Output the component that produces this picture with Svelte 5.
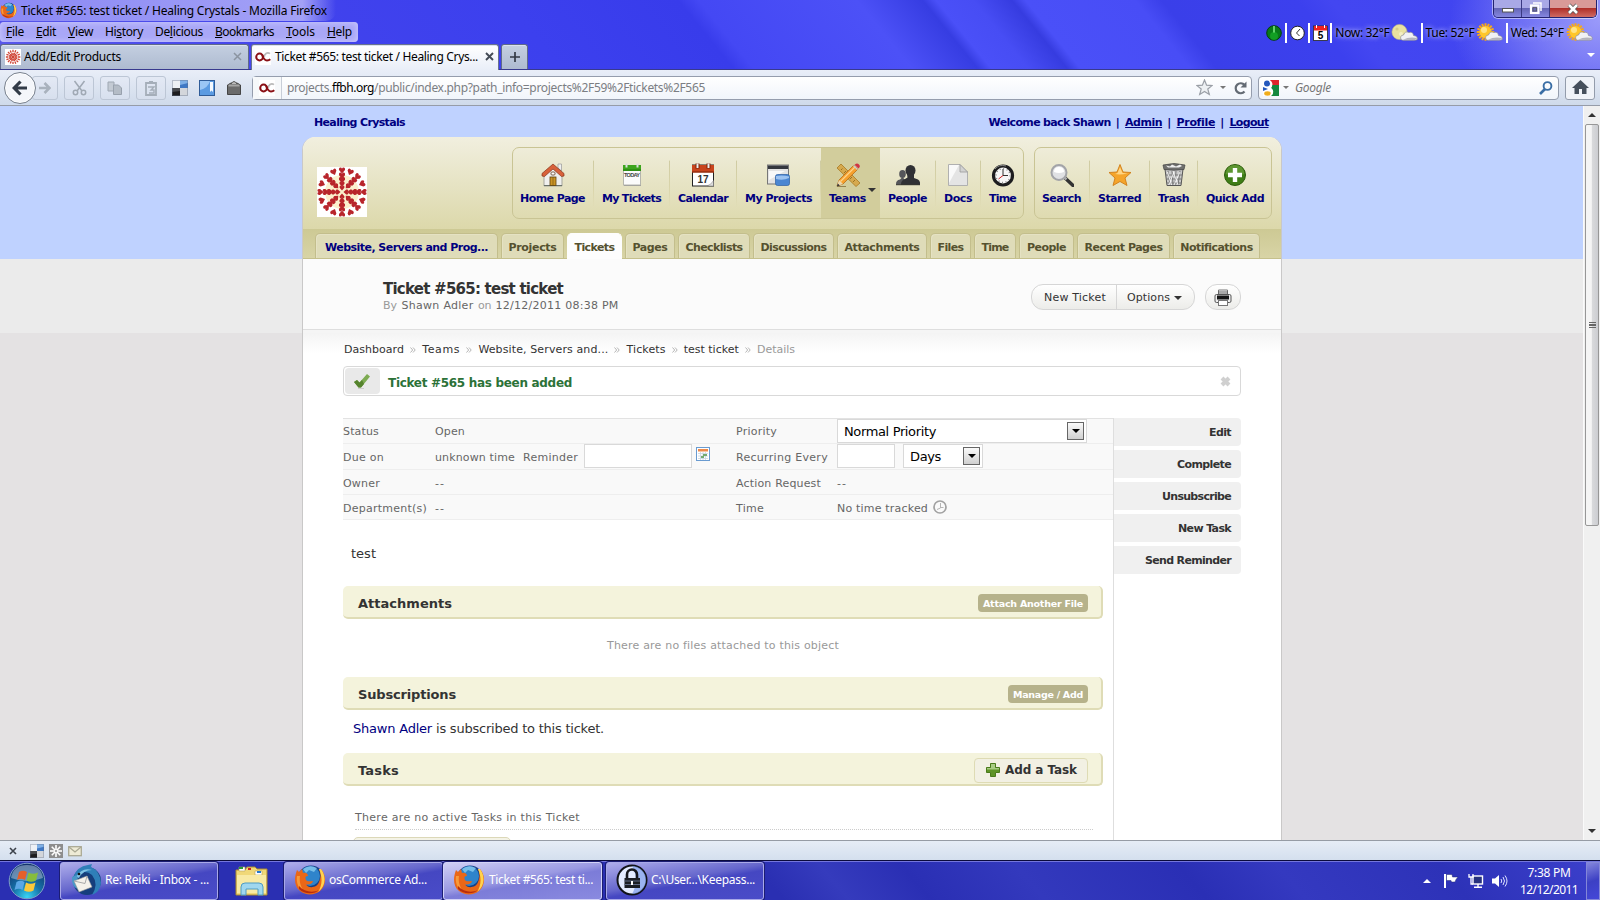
<script>
  // Tracks a label so that it fills its designed width.
  function fit(node, width) {
    const natural = node.getBoundingClientRect().width;
    const n = node.textContent.length;
    if (n && width) node.style.letterSpacing = ((width - natural) / n).toFixed(3) + 'px';
  }

  const menu = [
    ['File', 0, 18, 12], ['Edit', 0, 20, 12], ['View', 0, 25, 12], ['History', 2, 38, 12],
    ['Delicious', 2, 48, 12], ['Bookmarks', 0, 59, 12], ['Tools', 0, 29, 12], ['Help', 0, 25, 6]
  ];
  const mainNav = [
    { label: 'Home Page', w: 65, size: 81, icon: 'home' },
    { label: 'My Tickets', w: 59, size: 76, icon: 'today' },
    { label: 'Calendar', w: 50, size: 67, icon: 'calendar' },
    { label: 'My Projects', w: 67, size: 84, icon: 'projects' },
    { label: 'Teams', w: 37, size: 59, icon: 'teams', active: true },
    { label: 'People', w: 39, size: 56, icon: 'people' },
    { label: 'Docs', w: 28, size: 45, icon: 'docs' },
    { label: 'Time', w: 27, size: 42, icon: 'time' }
  ];
  const toolsNav = [
    { label: 'Search', w: 39, size: 55, icon: 'search' },
    { label: 'Starred', w: 43, size: 60, icon: 'star' },
    { label: 'Trash', w: 31, size: 48, icon: 'trash' },
    { label: 'Quick Add', w: 58, size: 73, icon: 'add' }
  ];
  const tabs = [
    ['Website, Servers and Prog...', 183, 163], ['Projects', 63, 48], ['Tickets', 55, 40],
    ['Pages', 50, 35], ['Checklists', 72, 57], ['Discussions', 81, 66], ['Attachments', 90, 75],
    ['Files', 41, 26], ['Time', 42, 27], ['People', 55, 39], ['Recent Pages', 93, 78],
    ['Notifications', 87, 72]
  ];
  const crumbs = [
    ['Dashboard', 60], ['Teams', 38], ['Website, Servers and...', 130],
    ['Tickets', 39], ['test ticket', 55], ['Details', 38]
  ];
  const actions = [['Edit', 22], ['Complete', 54], ['Unsubscribe', 69], ['New Task', 53], ['Send Reminder', 86]];
  const rays = Array.from({ length: 16 }, (_, i) => i * 22.5);
</script>

{#snippet t(text, w, cls = '')}<span class="t {cls}" use:fit={w}>{text}</span>{/snippet}

{#snippet heart(x, y, s)}
  <path transform="translate({x} {y}) scale({s})" d="M0 3.2 L-3 -.3 Q-3.4 -3 -1.6 -3 Q-.2 -3 0 -1.7 Q.2 -3 1.6 -3 Q3.4 -3 3 -.3Z" />
{/snippet}

{#snippet logo()}
  <svg class="logo" viewBox="0 0 50 50">
    <rect width="50" height="50" fill="#fff" />
    <circle cx="25" cy="25" r="17" fill="#fbf0cd" />
    <g fill="#b8252b">
      {#each rays as a, i}
        <g transform="rotate({a} 25 25)">
          {@render heart(25, 3.4, 1)}
          {#if i % 2 === 0}
            {@render heart(25, 8.6, 1)}
            {@render heart(25, 13, 1)}
            {@render heart(25, 17, 0.85)}
            {#if i % 4 === 0}{@render heart(25, 21, 0.8)}{/if}
          {/if}
        </g>
      {/each}
    </g>
  </svg>
{/snippet}

{#snippet burst(size, bg, color)}
  <svg width={size} height={size} viewBox="0 0 16 16">
    <rect width="16" height="16" fill={bg} />
    <g stroke={color} stroke-width="1.3">
      {#each rays.slice(0, 8) as a}<path transform="rotate({a} 8 8)" d="M8 .7v14.6" stroke-dasharray="2.4 .6" />{/each}
    </g>
  </svg>
{/snippet}

{#snippet oc()}
  <svg width="16" height="16" viewBox="0 0 16 16">
    <rect width="16" height="16" fill="#fff" />
    <path d="M15 4.6A3.6 3.6 0 0 0 9.3 8" fill="none" stroke="#bbb" stroke-width="1.8" />
    <circle cx="4.6" cy="8" r="3.4" fill="none" stroke="#8a1015" stroke-width="2" />
    <path d="M7 5.5Q9 11.4 12 11.4Q14 11.4 15.3 10.3" fill="none" stroke="#8a1015" stroke-width="2" />
  </svg>
{/snippet}

{#snippet delicious(s)}
  <svg width={s} height={s} viewBox="0 0 16 16">
    <rect width="8" height="8" fill="#eef1f5" /><rect x="8" width="8" height="8" fill="#3f78c4" />
    <path d="M8 5L16 3V0H8Z" fill="#7fb0e6" />
    <rect y="8" width="8" height="8" fill="#1d1d1f" /><path d="M0 8H8V11L0 12Z" fill="#47494d" />
    <rect x="8" y="8" width="8" height="8" fill="#d3d6db" />
    <rect x=".5" y=".5" width="15" height="15" fill="none" stroke="#61718a" stroke-opacity=".4" />
  </svg>
{/snippet}

{#snippet firefox(s)}
  <svg width={s} height={s} viewBox="0 0 32 32">
    <circle cx="17" cy="15" r="13.5" fill="#173f86" />
    <circle cx="16" cy="12" r="10" fill="#2f84cb" />
    <path d="M9 5Q16 0 23 4L20 8L15 6L12 9Z" fill="#8fd0f2" opacity=".75" />
    <path d="M27 5C33 12 32 22 26 27C21 31 12 32 6 27C0 22 0 14 3 6L5 8L8 5L9 9C12 8 14 10 14 12C11 12 11 14 12 16C13 18 17 17 19 17C18 21 13 21 12 20C14 25 23 24 25 18C27 13 27 9 25 5Z" fill="#ea6717" />
    <path d="M27 5C33 13 31 23 24 28C28 22 29 14 25 5Z" fill="#ffd44e" />
    <path d="M3 12C2 18 4 25 11 28C7 24 5 18 6 12Z" fill="#f79a3a" />
    <path d="M5 25C11 31 21 30 25 26C19 29 10 28 5 22Z" fill="#b82d0d" />
  </svg>
{/snippet}

{#snippet weather(night, w)}
  <svg width={w} height="20" viewBox="0 0 27 20">
    {#if night}
      <circle cx="8.5" cy="9" r="7.6" fill="#e9e1a0" stroke="#bdb783" stroke-width=".6" />
      <circle cx="6" cy="6" r="1.6" fill="#d4cc8a" /><circle cx="10" cy="11" r="2" fill="#f4efc4" />
    {:else}
      <g stroke="#f6a81c" stroke-width="2">
        {#each rays.slice(0, 8) as a}<path transform="rotate({a} 9.5 9)" d="M9.5 .2v17.6" />{/each}
      </g>
      <circle cx="9.5" cy="9" r="6" fill="#ffc629" /><circle cx="8" cy="7" r="3" fill="#ffe487" />
    {/if}
    <path d="M10 16.5Q8.5 12.5 12.5 12Q14 7.5 18 9.5Q22 8.500 22.500 12.500Q27 13 26.200 16.500Q25 17.500 22 17.300H13Q11 17.500 10 16.500Z" fill="#f1f1f4" stroke="#8d8d99" stroke-width=".7" />
    <path d="M12 16.800Q18 13.500 26 15Q25.500 17.200 22 17.100Z" fill="#b4b4bd" />
  </svg>
{/snippet}

{#snippet navIcon(name)}
  <svg class="nav-icon" width="24" height="24" viewBox="0 0 24 24">
    {#if name === 'home'}
      <path d="M17 1h3.500v7L17 5Z" fill="#eee" stroke="#999" stroke-width=".7" />
      <path d="M3 11L12 4L21 11V23H3Z" fill="#f0f0ee" stroke="#a5a59d" />
      <path d="M3 22.500h18" stroke="#69726a" />
      <path d="M1 13V10.500L12 1L23 10.500V13L20.500 13.500L12 6L3.500 13.500Z" fill="#d8613a" stroke="#85341b" stroke-width=".7" />
      <rect x="9" y="14" width="6" height="8.500" fill="#cb9425" stroke="#5f430d" stroke-width=".8" /><path d="M12 14v8" stroke="#73500f" stroke-width=".6" />
      <rect x="10" y="9" width="4" height="3" rx="1" fill="#fff" stroke="#7b5f48" />
    {:else if name === 'today'}
      <rect x="3.500" y="2.500" width="17" height="19.500" fill="#fbfbfb" stroke="#b5b5ad" />
      <path d="M3 2h18v6H3Z" fill="#3da51d" /><path d="M3 7h18" stroke="#257b0e" />
      <path d="M6.500 .5v4M17.500 .5v4" stroke="#ddd" stroke-width="2" />
      <text x="12" y="14.200" text-anchor="middle" font-size="5.500" fill="#444" textLength="16">TODAY</text>
      <path d="M4 22.500h17" stroke="#999" stroke-width=".8" />
    {:else if name === 'calendar'}
      <rect x="1.500" y="2" width="21" height="21" fill="#fff" stroke="#222" />
      <path d="M1 2h22v7.500H1Z" fill="#c9441c" /><path d="M1 9h22" stroke="#7f2307" />
      <path d="M6.500 .5v5M17.500 .5v5" stroke="#7f2307" stroke-width="4" /><path d="M6.500 .5v4.500M17.500 .5v4.500" stroke="#eee" stroke-width="2" />
      <text x="12" y="20" text-anchor="middle" font-size="10" font-weight="bold" fill="#333" textLength="11">17</text>
      <path d="M16 23Q20 22 22.500 17.500V23Z" fill="#ddd" stroke="#777" stroke-width=".5" />
    {:else if name === 'projects'}
      <rect x="1.500" y="2" width="21" height="19" fill="#e3e3e3" stroke="#777" />
      <path d="M2 2.500h20v3.500H2Z" fill="#34373e" /><path d="M3 8h16L3 17Z" fill="#f8f8f8" />
      <rect x="9.500" y="11.500" width="14" height="11" rx="2" fill="#4a86d2" stroke="#2d5fa3" stroke-width=".7" /><path d="M10 16Q17 18 23 15v-1.500Q17 12 10 13Z" fill="#9cc2f0" />
    {:else if name === 'teams'}
      <path d="M1 5L5 1L24 20L20 23.500Z" fill="#d6a94e" stroke="#a87a23" stroke-width=".8" />
      <path d="M5 7l1.500-1.500M8 10l2-2M14 16l2-2M17 19l2-2" stroke="#8b6518" stroke-width=".8" />
      <path d="M1 23L3 17L18 2L22 6L7 21Z" fill="#f6a02c" stroke="#ad6311" stroke-width=".7" />
      <path d="M4.500 18.500L19.500 3.500" stroke="#ffd389" stroke-width="1.200" /><path d="M1 23L3 17L7 21Z" fill="#ecd7ae" /><path d="M.8 23.500l1-3l2 2Z" fill="#333" />
      <path d="M17 3l4 4 1-1-4-4Z" fill="#ccc" /><path d="M19 1.500Q21-.5 23 1.500T22.500 5.500L18.500 1.800Z" fill="#cf3545" />
      <path d="M1 23.500h9" stroke="#806c3c" stroke-width=".8" />
    {:else if name === 'people'}
      <g fill="#55565a"><ellipse cx="6.500" cy="11" rx="3.300" ry="4" /><path d="M0 21Q0 17 4 16.500L6.500 14L9 17L10 21Z" /></g>
      <g fill="#303135"><ellipse cx="14.500" cy="7.500" rx="5" ry="5.500" /><path d="M11 11H18V15L22 16.500Q24.500 18 24 21.500H5Q5 17 9 16L11.500 14.500Z" /></g>
      <path d="M0 21.700h24" stroke="#222" />
    {:else if name === 'docs'}
      <path d="M2.500 1.500H14L21.500 9V22.500H2.500Z" fill="#e4e4e4" stroke="#b0b0b0" /><path d="M3 2h10L3 20Z" fill="#f9f9f9" />
      <path d="M14 1.500L21.500 9H14Z" fill="#d2d2d2" stroke="#999" stroke-width=".8" />
    {:else if name === 'time'}
      <circle cx="12" cy="12.500" r="9.500" fill="#f7f7f7" stroke="#1d1d1f" stroke-width="3.200" />
      <circle cx="12" cy="12.500" r="7" fill="none" stroke="#888" stroke-width="1.500" stroke-dasharray="1 2.660" />
      <path d="M12 6v6.500h5" fill="none" stroke="#333" stroke-width="1" /><path d="M12 12.500l-4.500 3.500" stroke="#c22" />
      <path d="M4 6Q8 1 15 3" stroke="#888" fill="none" />
    {:else if name === 'search'}
      <path d="M14 14L23 22.500" stroke="#333" stroke-width="3.400" stroke-linecap="round" /><path d="M13.500 13.500l3 3" stroke="#aaa" stroke-width="2.500" />
      <circle cx="9" cy="9.500" r="7.500" fill="#e0e1e4" stroke="#a3a4a8" stroke-width="2" /><path d="M4 9Q4 4 9 4T14 9Q9 11 4 9Z" fill="#fff" />
    {:else if name === 'star'}
      <path d="M12 1.500L15 9L23 9.500L17 15L19 22.500L12 18.500L5 22.500L7 15L1 9.500L9 9Z" fill="#f5a52b" stroke="#cf7d17" stroke-width=".9" />
      <path d="M12 4l2.500 6 5 .5Q12 12 7 11l2.500-1Z" fill="#ffd685" />
    {:else if name === 'trash'}
      <path d="M3 6H21L19 22.500H5Z" fill="#c9c9c9" stroke="#555" /><path d="M6 8l2 14M10 8l1 14M14 8l-1 14M18 8l-2 14M4 12h16M5 16h14M5 20h14" stroke="#777" />
      <path d="M5.500 9l4 13M11 8l5 14M18 9l-6 13M12 9L7 22" stroke="#f7f7f7" stroke-width=".9" />
      <path d="M1 2Q12-1 23 2L22 6.500Q12 8 2 6.500Z" fill="#70706e" stroke="#444" stroke-width=".7" /><path d="M4 2.500l4 1 2-2 4 2 4-2 2 1.500-3 1.500H6Z" fill="#f0f0f0" />
    {:else if name === 'add'}
      <circle cx="12" cy="12" r="10.500" fill="#3f7d16" stroke="#2d5c0c" /><path d="M2.500 11Q4 2 12 2T21.500 11Q12 14 2.500 11Z" fill="#6ba13d" opacity=".7" />
      <path d="M9.800 5h4.400v4.800H19v4.400h-4.800V19H9.800v-4.800H5V9.800h4.800Z" fill="#fff" />
    {/if}
  </svg>
{/snippet}

{#snippet navGroup(items)}
  <nav class="group">
    {#each items as it, i}
      <a class="nav-item" class:active={it.active} class:last={i === items.length - 1} style:width="{it.size}px">
        <span class="nav-inner">
          {@render navIcon(it.icon)}
          {@render t(it.label, it.w, 'nav-label')}
        </span>
        {#if it.active}<i class="tri dark nav-tri"></i>{/if}
      </a>
    {/each}
  </nav>
{/snippet}

{#snippet field(value, w, cls)}
  <span class="select {cls}">{@render t(value, w)}<span class="drop"><i class="tri black"></i></span></span>
{/snippet}

<div class="screen">
  <header class="chrome">
    <div class="titlebar">
      <span class="title">{@render firefox(17)}{@render t('Ticket #565: test ticket / Healing Crystals - Mozilla Firefox', 306)}</span>
      <span class="winbtns">
        <span class="wb"><svg width="12" height="12"><rect x=".5" y="5.500" width="11" height="3.500" fill="#fff" stroke="#555" /></svg></span>
        <span class="wb"><svg width="13" height="13"><path d="M4 1h8v8" fill="none" stroke="#fff" stroke-width="1.500" /><rect x="2" y="3.500" width="7.500" height="7.500" fill="none" stroke="#fff" stroke-width="2.200" /><rect x="4" y="5.500" width="3.500" height="3.500" fill="none" stroke="#555" stroke-width=".8" /></svg></span>
        <span class="wb close"><svg width="12" height="12"><path d="M2 2l8 8M10 2l-8 8" stroke="#555" stroke-width="4" /><path d="M2 2l8 8M10 2l-8 8" stroke="#fff" stroke-width="2.600" /></svg></span>
      </span>
    </div>
    <div class="menurow">
      <div class="menu">
        {#each menu as [label, key, w, gap]}
          <span class="t mi" use:fit={w} style:margin-right="{gap}px">{label.slice(0, key)}<u>{label[key]}</u>{label.slice(key + 1)}</span>
        {/each}
      </div>
      <div class="extras">
        <svg width="16" height="16"><circle cx="8" cy="8" r="7.300" fill="#087a18" stroke="#053f0a" /><path d="M8 8V1" stroke="#8af58f" stroke-width="1.400" /><circle cx="8" cy="11" r="4" fill="#19b52b" opacity=".6" /></svg>
        <i class="sep"></i>
        <svg width="15" height="16"><circle cx="7.500" cy="8" r="6.800" fill="#fff" stroke="#222" /><path d="M10 4L6.500 8L9.500 11" fill="none" stroke="#333" /></svg>
        <i class="sep"></i>
        <svg width="15" height="16"><rect x=".5" y="1" width="14" height="14.500" fill="#fff" stroke="#222" stroke-width=".8" /><rect x="1" y="1" width="13" height="4.500" fill="#e22" /><path d="M3.500 0v3M11.500 0v3" stroke="#fff" /><text x="7.500" y="14" text-anchor="middle" font-size="10" font-weight="bold">5</text></svg>
        <i class="sep"></i>
        {@render t('Now: 32°F', 54, 'glow')}{@render weather(true, 27)}
        <i class="sep"></i>
        {@render t('Tue: 52°F', 49, 'glow')}{@render weather(false, 27)}
        <i class="sep"></i>
        {@render t('Wed: 54°F', 53, 'glow')}{@render weather(false, 29)}
      </div>
    </div>
    <div class="tabrow">
      <div class="btab first">{@render burst(16, '#fff', '#cf4436')}{@render t('Add/Edit Products', 97)}<svg class="x" width="9" height="9"><path d="M1 1l7 7M8 1L1 8" stroke="#8b94a1" stroke-width="1.500" /></svg></div>
      <div class="btab current">{@render oc()}{@render t('Ticket #565: test ticket / Healing Crys...', 203)}<svg class="x" width="9" height="9"><path d="M1 1l7 7M8 1L1 8" stroke="#444b55" stroke-width="1.900" /></svg></div>
      <div class="btab plus"><svg width="10" height="10"><path d="M5 0v10M0 5h10" stroke="#333a44" stroke-width="1.700" /></svg></div>
      <i class="tri white alltabs"></i>
    </div>
    <div class="toolbar">
      <span class="back"><svg width="16" height="16"><path d="M8.500 1.500L2.200 8L8.500 14.500M2.500 8H15" fill="none" stroke="#323b47" stroke-width="3.200" /></svg></span>
      <span class="tb fwd"><svg width="12" height="12"><path d="M5.500 1L10.500 6L5.500 11M0 6H10" fill="none" stroke="#a9b2bd" stroke-width="2.600" /></svg></span>
      <span class="tb"><svg width="15" height="16"><path d="M2.500 1L10 11M12.500 1L5 11" stroke="#a0a9b4" stroke-width="1.500" /><circle cx="3.500" cy="12.500" r="2.200" fill="none" stroke="#a0a9b4" stroke-width="1.500" /><circle cx="11.500" cy="12.500" r="2.200" fill="none" stroke="#a0a9b4" stroke-width="1.500" /></svg></span>
      <span class="tb"><svg width="16" height="16"><path d="M1 2h6v9H1Z" fill="#c3cad3" stroke="#9fa8b3" /><path d="M6.500 5h5l3 3v6.500h-8Z" fill="#b4bcc6" stroke="#98a1ad" /></svg></span>
      <span class="tb"><svg width="14" height="16"><path d="M2 3h10v12H2Z" fill="none" stroke="#a5aeb9" stroke-width="1.800" /><path d="M5 1h4v3H5Z" fill="#a5aeb9" /><path d="M4 7h6L7 10h3v3H5" fill="none" stroke="#a5aeb9" stroke-width="1.400" /></svg></span>
      <span class="plain one">{@render delicious(16)}</span>
      <span class="plain two"><svg width="16" height="16"><rect x=".5" y=".5" width="15" height="15" fill="#5b9be2" stroke="#2f5c98" /><path d="M1 1h10Q9 8 1 10Z" fill="#9ac6f5" /><path d="M11 2h3v10l-1.500-1.500L11 12Z" fill="#f4f9ff" /></svg></span>
      <span class="plain three"><svg width="16" height="16"><path d="M1.500 5L5 3h6l3.500 2v9.500h-13Z" fill="#6b6b6b" stroke="#454545" /><path d="M5 4Q8-1 11 4" fill="#bbb" stroke="#555" /><path d="M2.500 5.500h11" stroke="#a5a5a5" stroke-width="2" /></svg></span>
      <div class="url">
        <span class="ident">{@render oc()}</span>
        <span class="addr">{@render t('projects.', 45)}{@render t('ffbh.org', 42, 'host')}{@render t('/public/index.php?path_info=projects%2F59%2Ftickets%2F565', 331)}</span>
        <svg width="17" height="17" viewBox="0 0 17 17"><path d="M8.500 1L10.600 6.200L16 6.600L11.800 10L13.300 15.500L8.500 12.500L3.700 15.500L5.200 10L1 6.600L6.400 6.200Z" fill="#edf0f3" stroke="#9a9fa6" stroke-width="1.200" /></svg>
        <i class="tri grey gap1"></i>
        <svg class="reload" width="13" height="14"><path d="M10.500 10.500A5 5 0 1 1 10.500 4" fill="none" stroke="#646b74" stroke-width="2.200" /><path d="M12.500 .5v6h-6Z" fill="#646b74" /></svg>
      </div>
      <div class="find">
        <svg width="16" height="16"><rect width="16" height="16" fill="#fff" /><path d="M7 0h9v5H8Z" fill="#e0242b" /><path d="M9 5h7v11H8Q12 11 8 8Z" fill="#14883e" /><circle cx="4" cy="3.500" r="3" fill="#2458bd" /><path d="M0 7l5 2-5 2Z" fill="#2458bd" /><ellipse cx="4.500" cy="13.500" rx="3.300" ry="2.200" fill="#f0ad1c" /><path d="M7 1Q10 5 6.500 8Q11 11 8 15" fill="none" stroke="#fff" stroke-width="2" /></svg>
        <i class="tri grey"></i>
        {@render t('Google', 36, 'ghost')}
        <svg class="mag" width="14" height="14"><circle cx="8.500" cy="5" r="3.900" fill="none" stroke="#3a6ea5" stroke-width="1.900" /><path d="M6 8L1 13" stroke="#3a6ea5" stroke-width="2.600" /></svg>
      </div>
      <span class="tb homebtn"><svg width="17" height="15"><path d="M8.500 0L17 8H14.500V14H10V9H7V14H2.500V8H0Z" fill="#46505c" /></svg></span>
    </div>
  </header>

  <main class="viewport">
    <div class="page">
      <div class="bands"><div class="blue"></div><div class="pale"></div></div>
      <div class="wrap">
        <div class="userbar">
          {@render t('Healing Crystals', 91)}
          <span class="user">{@render t('Welcome back Shawn', 122)}<b>|</b>{@render t('Admin', 37, 'ul')}<b>|</b>{@render t('Profile', 38, 'ul')}<b>|</b>{@render t('Logout', 39, 'ul')}</span>
        </div>
        <div class="container">
          <div class="masthead">
            {@render logo()}
            {@render navGroup(mainNav)}
            {@render navGroup(toolsNav)}
          </div>
          <div class="tabs">
            {#each tabs as [label, size, w], i}
              <a class="tab" class:lead={i === 0} class:sel={i === 2} style:width="{size}px">{@render t(label, w)}</a>
            {/each}
          </div>
          <div class="pagehead">
            <div class="heading">
              <h1>{@render t('Ticket #565: test ticket', 180)}</h1>
              <p class="by">{@render t('By', 14, 'soft')}{@render t('Shawn Adler', 72)}{@render t('on', 13, 'soft')}{@render t('12/12/2011 08:38 PM', 123)}</p>
            </div>
            <div class="pills">
              <span class="pill"><span class="seg a">{@render t('New Ticket', 62)}</span><span class="seg b">{@render t('Options', 43)}<i class="tri dark"></i></span></span>
              <span class="pill print"><svg width="18" height="17"><path d="M4.500 1h9v5h-9Z" fill="#fff" stroke="#777" /><path d="M4 3h10M4 5h10" stroke="#555" /><rect x="1" y="5.500" width="16" height="8" rx="1.500" fill="#eee" stroke="#555" /><path d="M3 6.500h12v4H3Z" fill="#151515" /><rect x="4.500" y="11.500" width="9" height="5" fill="#fff" stroke="#777" /></svg></span>
            </div>
          </div>
          <div class="body">
            <div class="crumbs">
              {#each crumbs as [label, w], i}
                {#if i}<svg class="chev" width="6" height="6"><path d="M.5 .5L2.700 3L.5 5.500M3 .5L5.200 3L3 5.500" fill="none" stroke="#b5b5b5" /></svg>{/if}{@render t(label, w, i === 5 ? 'soft' : '')}
              {/each}
            </div>
            <div class="flash">
              <span class="tick"><svg width="18" height="16"><path d="M1 9L4 7L6.500 9.500L14 1L17 3.500L8 14.500H5.500Z" fill="#7dab52" /><path d="M1 9L4 7L6.500 9.500L9 7L11 11L8 14.500H5.500Z" fill="#55832d" /><path d="M5 15.500h6" stroke="#ccc" /></svg></span>
              {@render t('Ticket #565 has been added', 184)}
              <svg class="dismiss" width="11" height="11"><path d="M2 2l7 7M9 2L2 9" stroke="#d0d0d0" stroke-width="4" /></svg>
            </div>
            <div class="cols">
              <div class="left">
                <div class="props">
                  <div class="row r1"><span class="c1">{@render t('Status', 36)}</span><span class="c2">{@render t('Open', 30)}</span><span class="c3">{@render t('Priority', 41)}</span>{@render field('Normal Priority', 92, 'wide')}</div>
                  <div class="row r2"><span class="c1">{@render t('Due on', 41)}</span><span class="c2">{@render t('unknown time', 80)}<span class="rem">{@render t('Reminder', 55)}</span><span class="input i1"></span>
                    <svg class="calico" width="14" height="14"><rect x=".5" y=".5" width="13" height="13" fill="#fff" stroke="#6a9bd0" /><path d="M2 2h10v2.500H2Z" fill="#ee8a4a" /><path d="M2 6.500h10M2 9h10M2 11.500h10M4.500 5v8M7 5v8M9.500 5v8" stroke="#c7d4e2" stroke-width=".8" /><path d="M7 7h4v2H8v2H5V9h2Z" fill="#75ab72" /></svg></span>
                    <span class="c3">{@render t('Recurring Every', 92)}</span><span class="input i2"></span>{@render field('Days', 31, 'days')}</div>
                  <div class="row r3"><span class="c1">{@render t('Owner', 37)}</span><span class="c2">{@render t('--', 10)}</span><span class="c3">{@render t('Action Request', 85)}</span>{@render t('--', 10)}</div>
                  <div class="row r4"><span class="c1">{@render t('Department(s)', 84)}</span><span class="c2">{@render t('--', 10)}</span><span class="c3">{@render t('Time', 28)}</span>{@render t('No time tracked', 91)}
                    <svg class="clk" width="14" height="14"><circle cx="7" cy="7" r="6" fill="#fafafa" stroke="#a2a2a2" stroke-width="1.700" /><path d="M7.500 3v5L4 9.500M7.500 7.500h3" fill="none" stroke="#b5b5b5" /></svg></div>
                </div>
                <p class="desc">{@render t('test', 25)}</p>
                <section>
                  <h2>{@render t('Attachments', 94)}<span class="badge">{@render t('Attach Another File', 100)}</span></h2>
                  <p class="empty">{@render t('There are no files attached to this object', 232)}</p>
                </section>
                <section>
                  <h2>{@render t('Subscriptions', 98)}<span class="badge">{@render t('Manage / Add', 70)}</span></h2>
                  <p class="subs">{@render t('Shawn Adler', 79, 'link')}{@render t('is subscribed to this ticket.', 168)}</p>
                </section>
                <section>
                  <h2>{@render t('Tasks', 41)}<span class="addtask"><svg width="14" height="14"><path d="M4.500 .5h5v4h4v5h-4v4h-5v-4h-4v-5h4Z" fill="#5f9426" stroke="#4a7a1b" /><path d="M5 1h4v4h4v1.500H1V5h4Z" fill="#a9cc84" /></svg>{@render t('Add a Task', 72)}</span></h2>
                  <p class="none">{@render t('There are no active Tasks in this Ticket', 225)}</p>
                  <div class="stub"></div>
                </section>
              </div>
              <aside>
                {#each actions as [label, w]}<a>{@render t(label, w)}</a>{/each}
              </aside>
            </div>
          </div>
        </div>
      </div>
    </div>
    <div class="scroll"><span class="arrow"><i class="tri up dark"></i></span><span class="thumb"><i></i><i></i><i></i></span><span class="arrow bottom"><i class="tri dark"></i></span></div>
  </main>

  <div class="addon">
    <svg class="ax" width="8" height="8"><path d="M1 1l6 6M7 1L1 7" stroke="#3c424b" stroke-width="1.600" /></svg>
    {@render delicious(14)}
    <span class="sq"><svg width="14" height="14"><rect width="14" height="14" fill="#8d8d8d" /><g stroke="#fff" stroke-width="1.600">{#each [0, 45, 90, 135] as a}<path transform="rotate({a} 7 7)" d="M7 1v12" />{/each}</g><circle cx="7" cy="7" r="1" fill="#8d8d8d" /></svg></span>
    <svg width="14" height="12"><rect x=".7" y="1.700" width="12.600" height="9" fill="#eeebd6" stroke="#aaa994" stroke-width="1.300" /><path d="M1 2l6 5 6-5" fill="none" stroke="#aaa994" stroke-width="1.300" /></svg>
  </div>

  <footer class="taskbar">
    <svg class="orb" width="38" height="38" viewBox="0 0 38 38">
      <defs><radialGradient id="orb" cx=".5" cy=".95" r=".9"><stop offset="0" stop-color="#39d5f5" /><stop offset=".45" stop-color="#1572a8" /><stop offset="1" stop-color="#12336e" /></radialGradient></defs>
      <circle cx="19" cy="19" r="17.800" fill="url(#orb)" stroke="#7f9fc6" /><path d="M3 16Q5 3 19 3T35 16Q19 22 3 16Z" fill="#b9cbe0" opacity=".5" />
      <path d="M11 10Q15 7.500 19 10L17 18Q13 15.500 9 18Z" fill="#e5602a" /><path d="M20.500 10.500Q25 13 30 10.500L28 18.500Q23 21 18.500 18.500Z" fill="#87bd3c" />
      <path d="M8.500 20Q12.500 17.500 16.500 20L14.500 28Q11 25.500 6.500 28Z" fill="#5aa7e6" /><path d="M18 20.500Q22.500 23 27.500 20.500L25.500 28.500Q21 31 16 28.500Z" fill="#fbc93a" />
    </svg>
    <span class="task reiki"><svg width="32" height="32"><circle cx="17" cy="17" r="14" fill="#153e7c" /><path d="M3 14Q7 2 18 1L22 0L21 3Q30 7 31 19Q30 28 22 31Q29 20 22 11Q14 4 5 13Z" fill="#2f7fb8" /><path d="M6 13Q12 3 22 6Q13 6 9 14Z" fill="#7fc3e6" /><path d="M2 13Q1 24 10 26L7 11Z" fill="#4a98c8" /><path d="M4 17L17 12L22 23L9 28Z" fill="#f4f1ea" stroke="#999" stroke-width=".6" /><path d="M4 17L15 19.500L17 12" fill="none" stroke="#aaa" /><circle cx="9" cy="10" r="1.300" fill="#111" /></svg>{@render t('Re: Reiki - Inbox - ...', 104)}</span>
    <svg class="folder" width="34" height="32"><path d="M1 5h9l2-3h8l2 2h10v26H1Z" fill="#f0d878" stroke="#a98a31" /><path d="M4 2h6v4H4ZM20 6h7v4h-7Z" fill="#fff" stroke="#b7a35b" stroke-width=".6" /><path d="M4 2h4v2H4Z" fill="#2a9a35" /><path d="M13 3h3v2h-3Z" fill="#c22" /><path d="M22 6h4v2h-4Z" fill="#27c" /><path d="M2 10h29v18H2Z" fill="#f8eaa4" /><path d="M6 30V22Q6 18 10 18H24Q28 18 28 22V30H23V24H11V30Z" fill="#9fd7ef" stroke="#4f9cc4" /></svg>
    <span class="task osc">{@render firefox(32)}{@render t('osCommerce Ad...', 98)}</span>
    <span class="task now">{@render firefox(32)}{@render t('Ticket #565: test ti...', 104)}</span>
    <span class="task keep"><svg width="32" height="32"><circle cx="16" cy="16" r="14.500" fill="#e3ebff" stroke="#111318" stroke-width="2" /><path d="M16 2a14 14 0 0 1 0 28Q24 16 16 2Z" fill="#7b9bea" opacity=".7" /><path d="M11 15v-4.500a5 5 0 0 1 10 0V15" fill="none" stroke="#15171c" stroke-width="2.600" /><rect x="8.500" y="14" width="15.500" height="10" fill="#1b1e24" /><path d="M8.500 17h15.500M8.500 20.500h15.500" stroke="#5f6a85" /><path d="M16 17v4" stroke="#fff" stroke-width="2" /></svg>{@render t('C:\\User...\\Keepass...', 104)}</span>
    <div class="tray">
      <i class="tri up white"></i>
      <svg width="16" height="16"><path d="M2 1v14" stroke="#fff" stroke-width="2" /><path d="M3.500 1.500H9L9.500 4H15L13 6.500L12 9H8.500L8 7.500H3.500Z" fill="#fff" stroke="#222a77" stroke-width=".5" /></svg>
      <svg class="net" width="16" height="16"><rect x="5" y="3" width="9.500" height="8" fill="#26317f" stroke="#fff" stroke-width="1.400" /><path d="M10 11v3M6 14.300h8" stroke="#fff" stroke-width="1.400" /><path d="M1 1v3h4V1M3 4v7h2" fill="none" stroke="#fff" stroke-width="1.300" /></svg>
      <svg class="spk" width="17" height="16"><path d="M1 5.500h3L8 2v12L4 10.500H1Z" fill="#fff" /><path d="M10 6q1.500 2 0 4M12 4q3 4 0 8M14 2.500q4 5.500 0 11" fill="none" stroke="#dfe3ff" /></svg>
      <span class="clock">{@render t('7:38 PM', 43)}{@render t('12/12/2011', 58)}</span>
      <span class="peek"></span>
    </div>
  </footer>
</div>

<style>
  :global(body) { margin: 0; overflow: hidden; }
  .screen { width: 1600px; height: 900px; display: flex; flex-direction: column; overflow: hidden; font: 12px "Noto Sans", "Open Sans", sans-serif; color: #000; }
  .screen :global(svg) { display: block; flex: none; }
  .t { display: inline-block; white-space: nowrap; flex: none; }
  h1, h2, p { margin: 0; }
  .tri { width: 0; height: 0; border: 4px solid transparent; border-bottom: 0; border-top: 4px solid #555; flex: none; }
  .tri.up { border-bottom: 4px solid; border-top: 0; }
  .tri.dark { border-top-color: #333; border-bottom-color: #333; }
  .tri.black { border-top-color: #000; }
  .tri.grey { border-width: 3px 3px 0; border-top-color: #777; }
  .tri.white { border-top-color: #fff; border-bottom-color: #fff; }

  .chrome { height: 106px; flex: none; box-sizing: border-box; background: radial-gradient(ellipse 150px 110px at 1600px 20px, #9a9afa, #9a9afa00), linear-gradient(51deg, #5c5aea 0, #4243ec 20%, #3c40ee 35%, #383ceb 45.3%, #4448f4 46.5%, #4c51f7 55.9%, #363de2 59.8%, #4a50f8 60.6%, #474df4 62.8%, #363ce0 65.1%, #4a50f8 65.9%, #484df6 72.4%, #3a3fe9 74%, #3c40ee 82%, #4346f1 84%, #4145f0 92%, #5656ef); }
  .titlebar { height: 22px; display: flex; justify-content: space-between; }
  .title { display: flex; align-items: center; gap: 4px; height: 21px; width: 336px; background: linear-gradient(90deg, #8a88f4, #a3a1f6 90%, #a3a1f600); border-radius: 0 0 10px 0; }
  .winbtns { display: flex; height: 17px; margin-right: 3px; border: 1px solid #23236f; border-top: 0; border-radius: 0 0 5px 5px; overflow: hidden; box-shadow: 0 0 0 1px #ffffff80; }
  .wb { width: 27px; display: grid; place-items: center; background: linear-gradient(#a9a9e6 45%, #6566b6 50%, #8587e0); border-right: 1px solid #3a3a82; }
  .wb.close { width: 46px; border: 0; background: linear-gradient(#d99a98 45%, #b0302a 50%, #d06b63); }
  .menurow { height: 21px; display: flex; justify-content: space-between; }
  .menu { height: 18px; padding-bottom: 2px; width: 352px; padding-left: 6px; background: #a9a7f7; border-radius: 4px; display: flex; align-items: center; box-shadow: inset 0 0 6px #d0cffc; }
  .extras { display: flex; align-items: center; gap: 3.400px; width: 334px; height: 21px; }
  .sep { width: 2px; height: 20px; background: #fff; margin: 0 -.5px; flex: none; }
  .extras .glow { text-shadow: 0 0 5px #aeb0ff, 0 0 5px #aeb0ff; margin-right: -2px; }
  .extras text { font-family: "Liberation Sans", sans-serif; }
  .tabrow { height: 27px; display: flex; align-items: flex-end; gap: 2px; position: relative; box-sizing: border-box; border-bottom: 1px solid #383a8e; }
  .btab { height: 25px; box-sizing: border-box; display: flex; align-items: center; border: 1px solid #606b88; border-bottom: 0; border-radius: 3px 3px 0 0; background: linear-gradient(#c4cfe1, #aebbd0); box-shadow: inset 0 1px #dbe2ee; padding-bottom: 1px; }
  .first { width: 249px; padding: 0 6px 1px 4px; gap: 3px; }
  .current { width: 248px; padding: 0 4px 2px 3px; gap: 4px; background: linear-gradient(#fff, #e9eef8); margin-bottom: -1px; height: 26px; border-color: #69738f; }
  .plus { width: 27px; justify-content: center; }
  .x { margin-left: auto; }
  .alltabs { position: absolute; left: 1587px; top: 10px; }
  .toolbar { height: 36px; box-sizing: border-box; background: linear-gradient(#e9eef8, #cfdaea); border-bottom: 1px solid #969ca8; display: flex; align-items: center; padding: 0 4px; }
  .tb { width: 30px; height: 24px; box-sizing: border-box; border: 1px solid #bcc6d5; border-radius: 3px; display: grid; place-items: center; margin-right: 6px; background: #e2e8f240; flex: none; }
  .back { width: 32px; height: 32px; box-sizing: border-box; border: 1px solid #77808d; border-radius: 50%; background: #f4f6fa; display: grid; place-items: center; z-index: 1; flex: none; box-shadow: inset 0 0 0 1px #fff; }
  .fwd { width: 26px; margin-left: -4px; }
  .plain { width: 16px; margin-right: 11px; flex: none; }
  .three { margin-right: 10px; }
  .url, .find { height: 24px; box-sizing: border-box; border: 1px solid #959dad; border-radius: 4px; background: linear-gradient(#fff, #f1f5fb); display: flex; align-items: center; flex: none; }
  .url { width: 1000px; }
  .ident { width: 28px; height: 22px; display: grid; place-items: center; border-right: 1px solid #c8ced8; background: #f6f8fa; }
  .addr { flex: 1; display: flex; padding-left: 5px; color: #7b7e83; }
  .host { color: #000; }
  .gap1 { margin: 0 8px 0 7px; }
  .reload { margin-right: 4px; }
  .find { width: 301px; margin: 0 6px 0 6px; padding: 0 5px 0 4px; gap: 4px; }
  .ghost { font-style: italic; color: #777; margin-left: 2px; }
  .mag { margin-left: auto; }
  .homebtn { margin: 0; border-color: #939cab; background: #f0f3f8; }

  .viewport { height: 734px; flex: none; display: flex; font-family: "DejaVu Sans", sans-serif; font-size: 11px; background: #e4e2e3; }
  .page { width: 1583px; display: grid; overflow: hidden; height: 734px; }
  .bands, .wrap { grid-area: 1 / 1; }
  .blue { height: 153px; background: #bfd2ff; }
  .pale { height: 74px; background: #ebebeb; }
  .wrap { width: 980px; margin-left: 302px; height: 734px; overflow: hidden; }
  .userbar { height: 31px; box-sizing: border-box; display: flex; justify-content: space-between; align-items: center; padding: 1px 13.500px 0 12px; font-weight: bold; color: #00007f; }
  .user { display: flex; }
  .user b { width: 14.500px; text-align: center; }
  .ul { text-decoration: underline; }
  .container { border: 1px solid #c9c8c8; border-top: 0; border-radius: 13px 13px 0 0; background: #fff; overflow: hidden; height: 704px; }
  .masthead { height: 92px; background: linear-gradient(#f1efdf, #dcd8aa); display: flex; box-sizing: border-box; padding: 10px 0 0 14px; }
  .logo { width: 50px; height: 50px; margin: 20px 145px 0 0; }
  .group { display: flex; height: 72px; box-sizing: border-box; border: 1px solid #c9c494; border-radius: 7px; margin-right: 10px; }
  .nav-item { display: flex; height: 70px; box-sizing: border-box; padding: 15px 0 0 8px; color: #00007f; font-weight: bold; border: 0 solid; border-right-width: 1px; border-image: linear-gradient(transparent 18%, #cfcba2 20%, #dad5ab 60%, transparent 85%) 1; }
  .nav-item:first-child { padding-left: 7px; }
  .nav-item.last { border: 0; }
  .nav-item.active { background: #d2cd9c; border-image: none; border-right-color: #d2cd9c; }
  .nav-inner { display: flex; flex-direction: column; align-items: center; gap: 5px; height: 50px; }
  .nav-icon text { font-family: "Liberation Sans", sans-serif; }
  .nav-tri { margin: 25px 0 0 2px; }
  .tabs { height: 30px; box-sizing: border-box; display: flex; gap: 3px; align-items: flex-end; padding-left: 12px; background: linear-gradient(#cdc994, #d8d4a6); border-bottom: 1px solid #c5c08c; }
  .tab { height: 25px; box-sizing: border-box; border: 1px solid #c3be8c; border-bottom: 0; border-radius: 5px 5px 0 0; background: #dfdcb9; color: #55512f; font-weight: bold; display: flex; align-items: center; justify-content: center; padding-top: 3px; box-shadow: inset 1px 1px #e5e2c3; }
  .lead { color: #00007f; }
  .sel { background: #fdfdfd; border-color: #fdfdfd; margin-bottom: -1px; height: 26px; padding-top: 2px; box-shadow: none; }
  .pagehead { height: 74px; box-sizing: border-box; background: #fbfbfb; border-bottom: 3px solid #f5f5f5; box-shadow: inset 0 -1px #dedede; display: flex; justify-content: space-between; padding: 21px 40px 0 80px; }
  h1 { font-size: 15px; line-height: 18px; color: #333; }
  .by { display: flex; gap: 4.500px; color: #666; line-height: 16px; }
  .soft { color: #999; }
  .pills { display: flex; gap: 10px; padding-top: 4px; }
  .pill { height: 26px; box-sizing: border-box; border: 1px solid #d6d6d6; border-radius: 12px; background: linear-gradient(#fff, #ecece9); display: flex; color: #333; }
  .seg { display: flex; align-items: center; gap: 4px; padding-top: 1px; box-sizing: border-box; }
  .seg.a { width: 85px; padding-left: 12px; border-right: 1px solid #d6d6d6; }
  .seg.b { width: 77px; padding-left: 10px; }
  .print { width: 36px; justify-content: center; align-items: center; }
  .body { padding: 0 40px; background: linear-gradient(#f4f4f4, #fff 20px); }
  .crumbs { height: 33px; display: flex; align-items: center; color: #333; gap: 6.100px; padding-left: 1px; box-sizing: border-box; }
  .chev { margin-top: 1px; }
  .flash { height: 30px; box-sizing: border-box; border: 1px solid #d9d9d9; border-radius: 4px; background: #fff; display: flex; align-items: center; padding: 0 9px 0 1px; font-weight: bold; font-size: 12px; color: #2c7238; margin-bottom: 22px; width: 898px; }
  .tick { width: 35px; height: 26px; background: #e9e9e9; border-radius: 4px; display: grid; place-items: center; margin-right: 8px; }
  .tick > :global(svg) { margin-left: -2px; }
  .flash > :global(.t) { margin-top: 4px; }
  .dismiss { margin-left: auto; }
  .cols { display: flex; width: 898px; }
  .left { width: 770px; border-right: 1px solid #dedede; height: 430px; }
  .props { color: #666; background: #f9f9f9; border-top: 1px solid #e2e2e2; }
  .row { display: flex; align-items: center; box-sizing: border-box; border-bottom: 1px solid #eee; }
  .r1 { height: 25px; } .r2 { height: 26px; padding-bottom: 1px; } .r3 { height: 25px; } .r4 { height: 25px; }
  .c1 { width: 92px; } .c2 { width: 301px; display: flex; align-items: center; } .c3 { width: 101px; }
  .row :global(.t) { position: relative; top: 1px; }
  .r1 :global(.t) { top: 0; }
  .rem { margin: 0 6px 0 8px; }
  .input { height: 24px; box-sizing: border-box; border: 1px solid #d9d9d9; background: #fff; }
  .i1 { width: 108px; margin-right: 4px; }
  .i2 { width: 58px; margin-right: 8px; }
  .calico { margin-top: -4px; }
  .select { height: 24px; box-sizing: border-box; border: 1px solid #d9d9d9; background: #fff; color: #000; font-size: 13px; display: flex; align-items: center; justify-content: space-between; padding: 0 2px 0 6px; }
  .row .select :global(.t) { top: 0; }
  .wide { width: 250px; } .days { width: 80px; }
  .drop { width: 17px; height: 18px; box-sizing: border-box; border: 1px solid #666; background: linear-gradient(#fafafa, #d0d0d0); display: grid; place-items: center; }
  .clk { margin-left: 5px; margin-top: -1px; }
  .desc { font-size: 13px; color: #333; padding: 24px 0 0 8px; height: 42px; line-height: 20px; }
  section { width: 760px; }
  h2 { height: 33px; box-sizing: border-box; background: #f4f3dc; border-bottom: 2px solid #dfdcb6; border-right: 2px solid #dfdcb6; border-radius: 5px; font-size: 13px; color: #333; display: flex; align-items: center; justify-content: space-between; padding: 4px 13px 0 15px; }
  .badge { font-size: 9.500px; color: #fff; background: #b6b28b; border-radius: 4px; height: 18px; display: flex; align-items: center; padding: 0 5px; margin-top: -1px; }
  .empty { height: 58px; line-height: 53px; text-align: center; color: #999; }
  .subs { height: 43px; line-height: 38px; font-size: 13px; padding-left: 10px; color: #333; display: flex; gap: 4px; }
  .link { color: #00007f; }
  .addtask { width: 114px; height: 25px; box-sizing: border-box; border: 1px solid #dedbb4; border-radius: 4px; background: #f2f0e3; display: flex; align-items: center; gap: 5px; padding-left: 11px; font-size: 12px; margin-top: -1px; }
  .none { height: 44px; box-sizing: border-box; margin: 0 10px 0 12px; color: #666; line-height: 64px; border-bottom: 1px dotted #ccc; width: 738px; }
  .stub { width: 158px; height: 20px; margin: 7px 0 0 10px; box-sizing: border-box; border: 1px solid #dcd8b8; border-radius: 5px; background: #f4f3e6; }
  aside { width: 127px; display: flex; flex-direction: column; gap: 4px; }
  aside a { height: 28px; box-sizing: border-box; background: #f0f0f0; border-radius: 0 4px 4px 0; display: flex; align-items: center; justify-content: flex-end; padding: 1px 10px 0 0; font-weight: bold; color: #333; }
  .scroll { width: 17px; display: flex; flex-direction: column; background: #f0f0f0; border-left: 1px solid #fafafa; box-sizing: border-box; }
  .arrow { height: 18px; display: grid; place-items: center; }
  .bottom { margin-top: auto; }
  .thumb { height: 402px; box-sizing: border-box; margin: 0 1px; border: 1px solid #979797; border-radius: 2px; background: linear-gradient(90deg, #f5f5f5 45%, #d9dadc 50%, #cccdd1); display: flex; flex-direction: column; gap: 1px; align-items: center; justify-content: center; }
  .thumb i { width: 7px; height: 1.500px; background: #666; }

  .addon { height: 20px; flex: none; box-sizing: border-box; border-top: 1px solid #969ca5; background: linear-gradient(#e6edf6, #d4dfee); display: flex; align-items: center; gap: 5px; padding-left: 9px; padding-top: 1px; }
  .ax { margin-right: 8px; }
  .taskbar { height: 40px; flex: none; box-sizing: border-box; border-top: 1px solid #0b0b3c; background: linear-gradient(50deg, #2a2fb2 0 48%, #353bbd 52%, #2a2fb4 57%, #3339bd 64%, #2a2fb5 74%, #3439c0 80%, #2d32b8 90%, #3c40cc); box-shadow: inset 0 1px #7476dd; display: flex; align-items: center; color: #fff; }
  .orb { margin: 0 14px 0 8px; }
  .task { height: 38px; box-sizing: border-box; border: 1px solid #a9a9e8; border-radius: 3px; display: flex; align-items: center; gap: 3px; padding: 0 0 2px 9px; background: linear-gradient(170deg, #aeadeb 0, #6566cc 45%, #4547c2 55%, #4a4cc8); box-shadow: 0 0 0 1px #1b1d73; }
  .reiki { width: 158px; margin-right: 17px; }
  .folder { margin-right: 15px; }
  .osc { width: 159px; }
  .now { width: 159px; background: linear-gradient(170deg, #d0cff5 0, #9a99e2 45%, #7c7cd8 55%, #8a8ae0); border-color: #d2d2f8; margin-right: 4px; }
  .now :global(.t) { margin-left: 1px; }
  .keep { width: 158px; }
  .tray { margin-left: auto; display: flex; align-items: center; height: 39px; }
  .tray > .tri { margin-right: 12px; }
  .net { margin: 0 7px 0 9px; }
  .spk { margin-right: 12px; }
  .clock { width: 58px; display: flex; flex-direction: column; align-items: center; line-height: 17px; margin-right: 8px; }
  .peek { width: 14px; height: 38px; box-sizing: border-box; border: 1px solid #8487d8; background: linear-gradient(160deg, #8486dc, #3c40c4 50%, #4447d8); }
</style>
